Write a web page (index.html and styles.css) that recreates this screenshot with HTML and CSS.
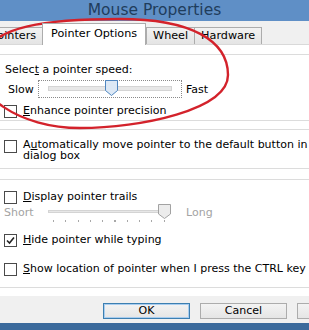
FILE: index.html
```html
<!DOCTYPE html>
<html lang="en">
<head>
    <meta charset="UTF-8">
    <meta name="viewport" content="width=device-width, initial-scale=1.0">
    <title>Mouse Properties</title>
    <link rel="stylesheet" href="styles.css">
</head>
<body>
    <div class="window">
        <div class="titlebar">Mouse Properties</div>

        <div class="tabs">
            <div class="tab first">Pointers</div>
            <div class="tab active">Pointer Options</div>
            <div class="tab">Wheel</div>
            <div class="tab">Hardware</div>
        </div>

        <div class="panel">
            <!-- Motion -->
            <div class="group motion">
                <div class="label">Selec<u>t</u> a pointer speed:</div>
                <div class="speed-row">
                    <span class="slow">Slow</span>
                    <div class="speed-box">
                        <div class="track"></div>
                        <svg class="thumb blue" width="13" height="16" viewBox="0 0 13 16">
                            <polygon points="0.5,0.5 12.5,0.5 12.5,10.5 6.5,15.5 0.5,10.5" />
                        </svg>
                    </div>
                    <span class="fast">Fast</span>
                </div>
                <div class="check-row">
                    <span class="box"></span>
                    <span><u>E</u>nhance pointer precision</span>
                </div>
            </div>

            <!-- Snap To -->
            <div class="group snap">
                <div class="check-row top">
                    <span class="box"></span>
                    <span class="wrap">A<u>u</u>tomatically move pointer to the default button in a dialog box</span>
                </div>
            </div>

            <!-- Visibility -->
            <div class="group visibility">
                <div class="check-row">
                    <span class="box"></span>
                    <span><u>D</u>isplay pointer trails</span>
                </div>
                <div class="trail-row">
                    <span class="short">Short</span>
                    <div class="trail-slider">
                        <div class="track"></div>
                        <div class="ticks"></div>
                        <svg class="thumb grey" width="13" height="15" viewBox="0 0 13 15">
                            <polygon points="0.5,0.5 12.5,0.5 12.5,10 6.5,14.5 0.5,10" />
                        </svg>
                    </div>
                    <span class="long">Long</span>
                </div>
                <div class="check-row hide">
                    <span class="box checked">
                        <svg width="11" height="11" viewBox="0 0 11 11">
                            <path d="M2 5.5 L4.5 8 L9 2.5" />
                        </svg>
                    </span>
                    <span><u>H</u>ide pointer while typing</span>
                </div>
                <div class="check-row show">
                    <span class="box"></span>
                    <span class="nowrap"><u>S</u>how location of pointer when I press the CTRL key</span>
                </div>
            </div>
        </div>

        <div class="buttons">
            <button class="btn default">OK</button>
            <button class="btn">Cancel</button>
            <button class="btn off">Apply</button>
        </div>
        <div class="taskbar"></div>

        <svg class="annotation" width="309" height="330" viewBox="0 0 309 330">
            <path d="M228 75 C228 40 190 19 120 19 C50 19 -10 25 -20 60 C-30 95 20 128 80 128 C140 128 228 110 228 75 Z" />
        </svg>
    </div>
</body>
</html>
```

FILE: styles.css
```css
body { margin: 0; font-family: "DejaVu Sans", sans-serif; font-size: 11px; color: #000; }
u { text-decoration: underline; text-underline-offset: 1px; }

.window { width: 309px; height: 330px; overflow: hidden; position: relative; background: #f0f0f0; display: flex; flex-direction: column; }

.titlebar { height: 21px; line-height: 21px; background: #5f8fc6; color: #1f3d5c; font-size: 15.5px; text-align: center; flex-shrink: 0; }

.tabs { height: 23px; display: flex; align-items: flex-end; background: #f0f0f0; flex-shrink: 0; font-size: 11.2px; }
.tab { height: 17px; line-height: 16px; padding: 0 6px; box-sizing: border-box; border: 1px solid #acacac; border-bottom: none; background: linear-gradient(#f2f2f2, #e4e4e4); margin-right: -1px; white-space: nowrap; }
.tab.first { margin-left: -16px; }
.tab.active { height: 22px; line-height: 20px; padding: 0 8px; margin: 0 0 -1px 0; background: #fff; position: relative; z-index: 1; }

.panel { background: #fff; border-top: 1px solid #d9d9d9; padding-bottom: 8px; flex-shrink: 0; }
.group { border-top: 1px solid #dcdcdc; border-bottom: 1px solid #dcdcdc; }
.motion { margin-top: 9px; padding: 8px 0 2px; }
.snap { margin-top: 8px; padding: 10px 0 7px; }
.visibility { margin-top: 10px; padding: 10px 0 11px; }

.label { line-height: 14px; padding-left: 5px; }

.speed-row { display: flex; align-items: center; height: 18px; margin-top: 3px; }
.slow { width: 30px; padding-left: 8px; }
.fast { margin-left: 4px; }
.speed-box { position: relative; width: 144px; height: 18px; box-sizing: border-box; border: 1px dotted #8a8a8a; }
.speed-box .track { margin: 5px 9px 0 9px; height: 3px; background: #e7e7e7; border: 1px solid #d4d4d4; }
.thumb { position: absolute; top: 0; }
.speed-box .thumb { left: 66px; top: -1px; }
.thumb.blue polygon { fill: #dce8f5; stroke: #4f86c0; }
.thumb.grey polygon { fill: #ececec; stroke: #a2a2a2; }

.check-row { display: flex; align-items: center; line-height: 14px; padding-left: 4px; }
.check-row.top { align-items: flex-start; line-height: 10.5px; }
.motion .check-row { margin-top: 6px; }
.box { width: 13px; height: 13px; box-sizing: border-box; border: 1px solid #4a4a4a; background: #fff; margin-right: 6px; flex-shrink: 0; display: flex; align-items: center; justify-content: center; }
.box svg path { fill: none; stroke: #222; stroke-width: 1.6; }
.wrap { width: 306px; flex-shrink: 0; }
.nowrap { white-space: nowrap; }

.trail-row { display: flex; align-items: flex-start; height: 20px; color: #a3a3a3; }
.short { width: 44px; padding-left: 4px; margin-top: 2px; line-height: 14px; }
.long { margin-left: 15px; margin-top: 2px; line-height: 14px; }
.trail-slider { position: relative; width: 123px; height: 20px; }
.trail-slider .track { margin-top: 6px; height: 3px; width: 117px; background: #e7e7e7; border: 1px solid #d4d4d4; box-sizing: border-box; }
.ticks { margin: 7px 0 0 5px; width: 113px; height: 2px; background: repeating-linear-gradient(to right, #a8a8a8 0 1px, transparent 1px 12.3px); }
.trail-slider .thumb { left: 110px; }

.hide { margin-top: 9px; }
.show { margin-top: 15px; }

.buttons { flex: 1; display: flex; align-items: flex-start; gap: 10px; padding: 7px 0 0 103px; overflow: hidden; }
.btn { width: 87px; height: 16px; flex-shrink: 0; border: 1px solid #acacac; background: linear-gradient(#f3f3f3, #e5e5e5); font-family: "DejaVu Sans", sans-serif; font-size: 11px; padding: 0; line-height: 14px; color: #000; text-align: center; }
.btn.default { border-color: #3c7fb1; box-shadow: inset 0 0 0 1px #a9cdef; }
.btn.off { color: #a0a0a0; }

.taskbar { height: 7px; background: #3b6a9c; flex-shrink: 0; }

.annotation { position: absolute; top: 0; left: 0; pointer-events: none; }
.annotation path { fill: none; stroke: #d3222b; stroke-width: 2.4; }
```
